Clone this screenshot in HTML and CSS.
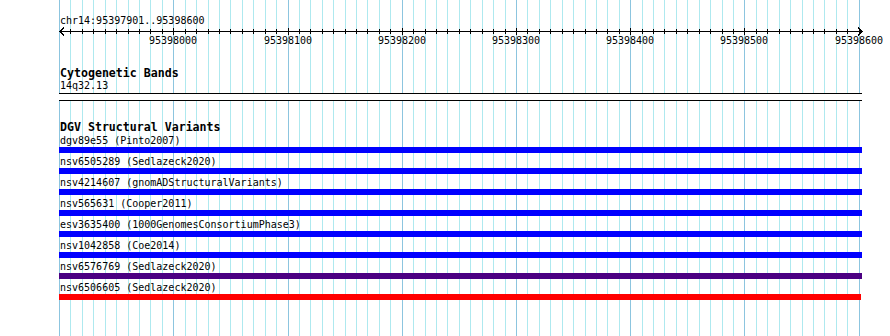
FILE: index.html
```html
<!DOCTYPE html>
<html>
<head>
<meta charset="utf-8">
<link rel="stylesheet" href="styles.css">
</head>
<body>
<div class="view">
  <svg class="grid" width="890" height="336" viewBox="0 0 890 336" aria-hidden="true">
    <path class="minor" d="M70.5 0V336M82.5 0V336M93.5 0V336M105.5 0V336M116.5 0V336M128.5 0V336M139.5 0V336M150.5 0V336M162.5 0V336M185.5 0V336M196.5 0V336M208.5 0V336M219.5 0V336M230.5 0V336M242.5 0V336M253.5 0V336M265.5 0V336M276.5 0V336M299.5 0V336M310.5 0V336M322.5 0V336M333.5 0V336M345.5 0V336M356.5 0V336M367.5 0V336M379.5 0V336M390.5 0V336M413.5 0V336M425.5 0V336M436.5 0V336M447.5 0V336M459.5 0V336M470.5 0V336M482.5 0V336M493.5 0V336M505.5 0V336M527.5 0V336M539.5 0V336M550.5 0V336M562.5 0V336M573.5 0V336M585.5 0V336M596.5 0V336M607.5 0V336M619.5 0V336M642.5 0V336M653.5 0V336M664.5 0V336M676.5 0V336M687.5 0V336M699.5 0V336M710.5 0V336M722.5 0V336M733.5 0V336M756.5 0V336M767.5 0V336M779.5 0V336M790.5 0V336M802.5 0V336M813.5 0V336M824.5 0V336M836.5 0V336M847.5 0V336"/>
    <path class="major" d="M59.5 0V336M173.5 0V336M288.5 0V336M402.5 0V336M516.5 0V336M630.5 0V336M744.5 0V336M859.5 0V336"/>
  </svg>
  <div class="content">
    <div class="locus">chr14:95397901..95398600</div>
    <svg class="ruler" width="890" height="20" viewBox="0 0 890 20">
      <path class="axis" d="M60 4.5H862M64 0.5L60 4.5L64 8.5M858 0.5L862 4.5L858 8.5"/>
      <path class="axis" d="M70.5 2V7M82.5 2V7M93.5 2V7M105.5 2V7M116.5 2V7M128.5 2V7M139.5 2V7M150.5 2V7M162.5 2V7M185.5 2V7M196.5 2V7M208.5 2V7M219.5 2V7M230.5 2V7M242.5 2V7M253.5 2V7M265.5 2V7M276.5 2V7M299.5 2V7M310.5 2V7M322.5 2V7M333.5 2V7M345.5 2V7M356.5 2V7M367.5 2V7M379.5 2V7M390.5 2V7M413.5 2V7M425.5 2V7M436.5 2V7M447.5 2V7M459.5 2V7M470.5 2V7M482.5 2V7M493.5 2V7M505.5 2V7M527.5 2V7M539.5 2V7M550.5 2V7M562.5 2V7M573.5 2V7M585.5 2V7M596.5 2V7M607.5 2V7M619.5 2V7M642.5 2V7M653.5 2V7M664.5 2V7M676.5 2V7M687.5 2V7M699.5 2V7M710.5 2V7M722.5 2V7M733.5 2V7M756.5 2V7M767.5 2V7M779.5 2V7M790.5 2V7M802.5 2V7M813.5 2V7M824.5 2V7M836.5 2V7M847.5 2V7"/>
      <path class="axis" d="M173.5 1V8M288.5 1V8M402.5 1V8M516.5 1V8M630.5 1V8M744.5 1V8M859.5 1V8"/>
      <text x="173" y="16.5">95398000</text>
      <text x="288" y="16.5">95398100</text>
      <text x="402" y="16.5">95398200</text>
      <text x="516" y="16.5">95398300</text>
      <text x="630" y="16.5">95398400</text>
      <text x="744" y="16.5">95398500</text>
      <text x="859" y="16.5">95398600</text>
    </svg>

    <section class="track cyto">
      <h2 class="track-title">Cytogenetic Bands</h2>
      <div class="label">14q32.13</div>
      <div class="band"></div>
    </section>

    <section class="track dgv">
      <h2 class="track-title">DGV Structural Variants</h2>
      <div class="row"><div class="label">dgv89e55 (Pinto2007)</div><div class="bar blue"></div></div>
      <div class="row"><div class="label">nsv6505289 (Sedlazeck2020)</div><div class="bar blue"></div></div>
      <div class="row"><div class="label">nsv4214607 (gnomADStructuralVariants)</div><div class="bar blue"></div></div>
      <div class="row"><div class="label">nsv565631 (Cooper2011)</div><div class="bar blue"></div></div>
      <div class="row"><div class="label">esv3635400 (1000GenomesConsortiumPhase3)</div><div class="bar blue"></div></div>
      <div class="row"><div class="label">nsv1042858 (Coe2014)</div><div class="bar blue"></div></div>
      <div class="row"><div class="label">nsv6576769 (Sedlazeck2020)</div><div class="bar purple"></div></div>
      <div class="row"><div class="label">nsv6506605 (Sedlazeck2020)</div><div class="bar red"></div></div>
    </section>
  </div>
</div>
</body>
</html>
```

FILE: styles.css
```css
html, body {
  margin: 0;
  padding: 0;
  background: #ffffff;
}

body {
  font-family: "DejaVu Sans Mono", "Liberation Mono", monospace;
  font-size: 10px;
  color: #000000;
}

.view {
  position: relative;
  width: 890px;
  height: 336px;
  overflow: hidden;
}

.grid {
  position: absolute;
  left: 0;
  top: 0;
}

.grid path {
  fill: none;
  stroke-width: 1;
  shape-rendering: crispEdges;
}

.grid .minor {
  stroke: #aee9ef;
}

.grid .major {
  stroke: #8cc5df;
}

.content {
  position: relative;
}

.locus {
  margin-left: 60px;
  padding-top: 15px;
  line-height: 12px;
  height: 12px;
}

.ruler {
  display: block;
  overflow: visible;
}

.ruler .axis {
  fill: none;
  stroke: #000000;
  stroke-width: 1;
  shape-rendering: crispEdges;
}

.ruler text {
  font-family: "DejaVu Sans Mono", "Liberation Mono", monospace;
  font-size: 10px;
  text-anchor: middle;
  fill: #000000;
}

.track {
  margin-left: 59px;
  width: 803px;
}

.track-title {
  margin: 0;
  padding-left: 1px;
  font-size: 11.6px;
  font-weight: bold;
  line-height: 13px;
  height: 13px;
}

.label {
  padding-left: 1px;
  line-height: 12px;
  height: 12px;
  white-space: nowrap;
}

.cyto {
  margin-top: 20px;
}

.cyto .label {
  line-height: 11px;
  height: 11px;
}

.band {
  margin-top: 2px;
  height: 6px;
  background: #ffffff;
  border-top: 1px solid #000000;
  border-bottom: 1px solid #000000;
}

.dgv {
  margin-top: 20px;
}

.dgv .label {
  padding-top: 1px;
}

.row {
  margin-bottom: 2px;
}

.bar {
  height: 6px;
}

.bar.blue {
  background: #0000ff;
}

.bar.purple {
  background: #4b0082;
}

.bar.red {
  background: #ff0000;
  width: 802px;
}
```
